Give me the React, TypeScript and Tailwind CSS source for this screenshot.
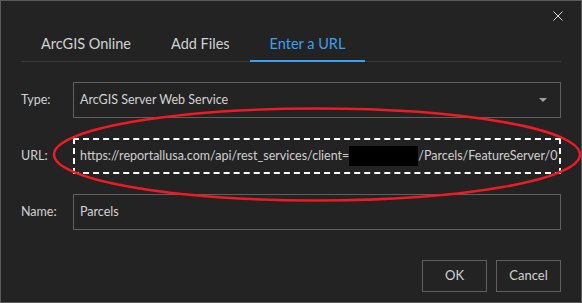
const TABS = ['ArcGIS Online', 'Add Files', 'Enter a URL'];

function Field({ label, children }: { label: string; children: React.ReactNode }) {
  return (
    <div className="flex items-center">
      <label className="w-[52px] shrink-0 text-[12.5px] text-[#d2d2d2]">{label}</label>
      {children}
    </div>
  );
}

export default function App() {
  const active = 'Enter a URL';

  return (
    <div className="relative w-[582px] h-[303px] bg-[#232323] border border-[#5a5a5a] font-['Lato',sans-serif] px-[20px] pt-[26px] overflow-hidden">
      {/* Close */}
      <button className="absolute top-[10px] right-[18px] w-[10px] h-[10px]" aria-label="Close">
        <svg width="10" height="10" viewBox="0 0 10 10">
          <path d="M0.5 0.5L9.5 9.5M9.5 0.5L0.5 9.5" stroke="#dcdcdc" strokeWidth="1" />
        </svg>
      </button>

      {/* Tabs */}
      <div className="flex border-b border-[#3a3a3a]">
        {TABS.map((tab) => (
          <div
            key={tab}
            className={
              tab === active
                ? 'relative h-[34px] flex items-center px-5 text-[14.5px] text-[#3d9ff0]'
                : 'relative h-[34px] flex items-center px-5 text-[14.5px] text-[#d2d2d2]'
            }
          >
            {tab}
            {tab === active && <span className="absolute left-0 right-0 bottom-[-1px] h-[2px] bg-[#3d9ff0]" />}
          </div>
        ))}
      </div>

      {/* Form */}
      <div className="mt-[20px] flex flex-col gap-[20px]">
        <Field label="Type:">
          <div className="flex-1 h-[36px] border border-[#5f5f5f] flex items-center justify-between pl-[6px] pr-[13px] text-[12.5px] text-[#d2d2d2]">
            <span>ArcGIS Server Web Service</span>
            <svg width="8" height="4" viewBox="0 0 8 4">
              <path d="M0 0h8L4 4z" fill="#a0a0a0" />
            </svg>
          </div>
        </Field>
        <Field label="URL:">
          <div className="flex-1 h-[36px] border-2 border-dashed border-white flex items-center pl-[5px] text-[12.5px] text-[#cfcfcf] whitespace-nowrap">
            <span>https://reportallusa.com/api/rest_services/client=</span>
            <span className="inline-block w-[69px] h-[20px] bg-black" />
            <span>/Parcels/FeatureServer/0</span>
          </div>
        </Field>
        <Field label="Name:">
          <div className="flex-1 h-[36px] border border-[#5f5f5f] flex items-center pl-[6px] text-[12.5px] text-[#d2d2d2]">
            Parcels
          </div>
        </Field>
      </div>

      {/* Buttons */}
      <div className="mt-[30px] flex justify-end gap-[9px]">
        <button className="w-[65px] h-[32px] border border-[#5f5f5f] text-[13px] text-[#d2d2d2]">OK</button>
        <button className="w-[65px] h-[32px] border border-[#5f5f5f] text-[13px] text-[#d2d2d2]">Cancel</button>
      </div>

      {/* Red annotation */}
      <svg className="absolute left-[-1px] top-[-1px] pointer-events-none" width="582" height="303" viewBox="0 0 582 303">
        <ellipse cx="317" cy="154.5" rx="263" ry="46" fill="none" stroke="#ed1c24" strokeWidth="2.5" />
      </svg>
    </div>
  );
}
